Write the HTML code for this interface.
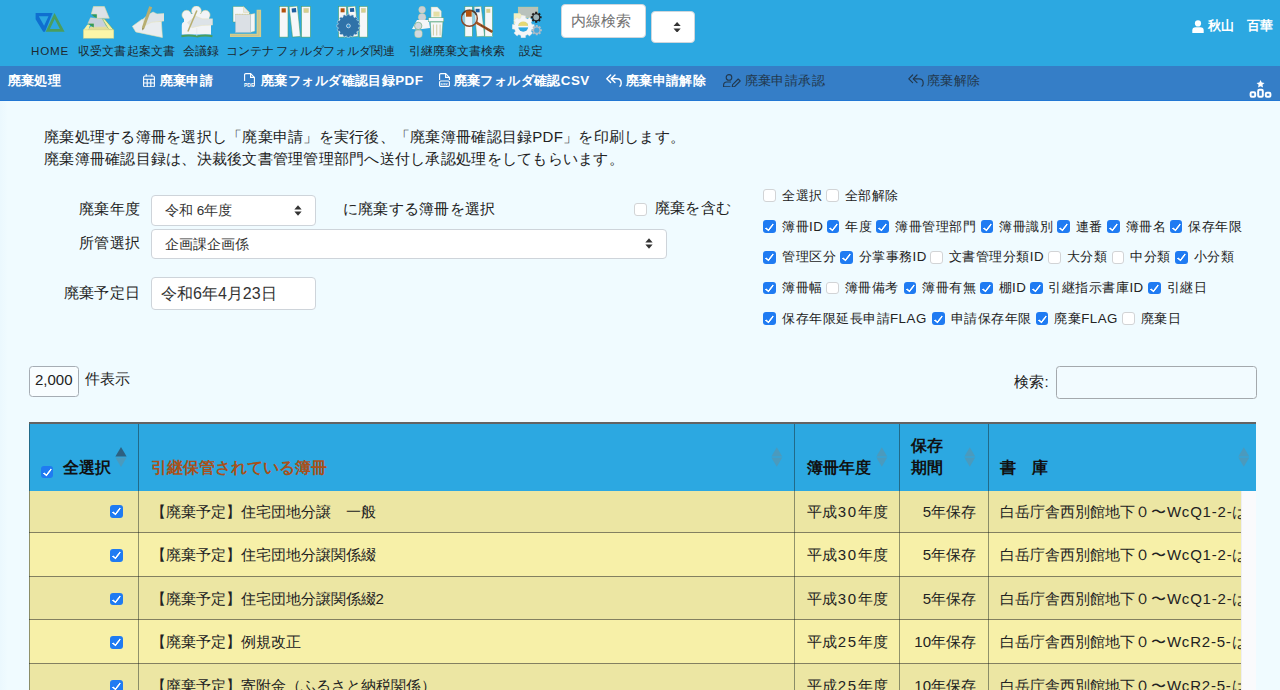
<!DOCTYPE html>
<html lang="ja"><head><meta charset="utf-8">
<style>
*{box-sizing:border-box;margin:0;padding:0}
html,body{width:1280px;height:690px;overflow:hidden}
body{font-family:"Liberation Sans",sans-serif;background:linear-gradient(to right,#ebf8fe 0,#f0fbff 8px) #f0fbff;color:#222;position:relative;font-size:15px}
.abs{position:absolute;white-space:nowrap}
#top{position:absolute;left:0;top:0;width:1280px;height:66px;background:#2ca8e1}
#bar2{position:absolute;left:0;top:66px;width:1280px;height:35px;background:#357ec7;border-bottom:1.5px solid #2277d3}
.nav{position:absolute;top:44px;font-size:11.6px;color:#1c2830;white-space:nowrap;transform:translateX(-50%);line-height:14px}
.ico{position:absolute;top:6px;width:32px;height:32px}
.m{position:absolute;top:72.7px;letter-spacing:.42px;font-size:13.4px;font-weight:bold;color:#fff;white-space:nowrap;line-height:16px}
.m.dis{color:#22384d;font-weight:normal}

.lbl{font-size:15px;line-height:22px;color:#222;letter-spacing:.22px}
.sel{background:#fff;border:1px solid #ced4da;border-radius:4px;color:#333}
.cb{width:12.5px;height:12.5px;border:1px solid #c4c4c4;border-radius:3px;background:#fff}
i.ck{position:absolute;display:block;width:12.8px;height:12.8px;border:1px solid #d2d4d6;border-radius:3px;background:#fff}
i.ck.on{border:none;background:#1f7bf2}
i.ck.on::after{content:"";position:absolute;left:4.1px;top:1.3px;width:2.6px;height:6.9px;border:solid #fff;border-width:0 2.1px 2.1px 0;transform:rotate(38deg);border-radius:.6px}
.ckl{font-size:13.3px;line-height:17px;color:#222;letter-spacing:.5px}
#tbl{position:absolute;left:29px;top:422.4px;width:1227.2px;height:268px;overflow:hidden;border-top:2px solid #636363}
#tbl .hd{position:absolute;left:0;top:0;width:100%;height:67px;background:#2ca8e1}
#tbl .r{position:absolute;left:0;width:100%;border-top:1px solid #838060}
#tbl .r.o{background:#ece6a3}
#tbl .r.e{background:#f7f0a8}
#tbl .vl{position:absolute;top:0;width:1px;height:100%;background:rgba(20,30,30,.45)}
#tbl .sb{position:absolute;left:1212px;top:66.5px;width:16px;height:200px;background:#fafafc;border-left:1px solid #eeeef2}
.th{font-size:16px;font-weight:bold;color:#111;line-height:22px}
.td{font-size:15px;line-height:22px;color:#222}
.so{top:445.9px;width:11.6px;height:22px;fill:#4b9abd}
</style></head><body>
<div id="top"></div>
<div id="bar2"></div>
<!--NAV-->
<svg class="ico" style="left:34px;top:10px;width:32px;height:24px" viewBox="0 0 32 24">
 <path fill-rule="evenodd" fill="#0f6fd0" d="M1.6 3H18.6L11 21.7H9.2L1.6 9.2ZM4.8 6.3H14.5L10.1 15.8Z"/>
 <path fill-rule="evenodd" fill="#4a9d5c" d="M20.5 2.9L30.6 21.7H11.7ZM20.7 8.9L25.9 19H15.9Z"/>
</svg>
<svg class="ico" style="left:82.6px;top:6.4px;height:33px" viewBox="0 0 32 33">
 <polygon points="4.3,18.8 7.2,18.2 5.5,24 .4,24" fill="#f6f1a4"/>
 <polygon points="19.3,13 21.6,13 30.8,24 26,24" fill="#f3eea0" stroke="#4a9d5c" stroke-width=".5"/>
 <polygon points="5,24 7.5,20.5 23.5,20.5 26.5,24" fill="#e3dd98"/>
 <polygon points="7.5,11.8 19.1,13.1 23.3,20.9 10.9,21.2 10.9,17.5 4.9,17.5" fill="#c7d0dc" stroke="#e4dfa0" stroke-width=".5"/>
 <polygon points="4.9,17.7 10.7,17.7 10.7,21.4 7.6,19.6" fill="#3a9a50"/>
 <polygon points="10.4,.6 21.4,.6 26.3,12.2 13.9,12.2 13.9,8.1 8.3,8.1" fill="#dde2e7" stroke="#e4dfa0" stroke-width=".6"/>
 <polygon points="8.3,8.5 13.7,8.5 13.7,12 10.8,10.6" fill="#3a9a50"/>
 <rect x=".4" y="23.9" width="30.4" height="8.3" fill="#fbf6a8" stroke="#cfd08a" stroke-width=".5"/>
</svg>
<svg class="ico" style="left:131.5px;top:6.4px" viewBox="0 0 32 32">
 <polygon points=".4,20.3 9.8,13.4 29.3,15.2 30.4,31.5 3.8,25.9" fill="#e9edf0" stroke="#e8e4b4" stroke-width=".6"/>
 <polygon points="10.5,13.4 16.5,8.6 21,6 25,7.9 32,7.6 32,15 19.5,16.3 13.2,19.4" fill="#dde3e8" stroke="#e8e4b4" stroke-width=".5"/>
 <polygon points="17.2,.2 20.2,1.3 12.4,22.6 9.9,21.6" fill="#b7ae70"/>
 <polygon points="9.9,21.6 12.4,22.6 10.4,24.4" fill="#9a9058"/>
</svg>
<svg class="ico" style="left:181px;top:6px" viewBox="0 0 32 32">
 <g fill="#f2f4f7" stroke="#d8d08c" stroke-width=".5"><circle cx="5.6" cy="9" r="4.7"/><circle cx="24.4" cy="9" r="4.7"/><circle cx="15.4" cy="4.9" r="4.9"/></g>
 <path d="M.8 28.5 V19 Q.8 15.5 5 15.5 H26 Q30 15.5 30 19 V28.5Z" fill="#f2f4f7"/>
 <rect x="3" y="8" width="25" height="9" fill="#f2f4f7"/>
 <polygon points="6.4,16.5 14.6,10.1 21.4,12.8 31.6,12.8 31.6,19.1 20.6,19.5 10.9,21.8" fill="#dde3e8" stroke="#e8e4b4" stroke-width=".4"/>
 <polygon points="15.2,4.2 16.6,4.8 7.6,25.8 6.2,25.2" fill="#b7ae70"/>
 <path d="M.4 30.2 Q8 28.6 15.8 30.4 Q24 28.6 31.4 30.2" fill="none" stroke="#4a9d5c" stroke-width="2"/>
 <path d="M15.8 22V30" stroke="#dfe4e8" stroke-width=".6"/>
</svg>
<svg class="ico" style="left:229.9px;top:6.4px" viewBox="0 0 32 32">
 <polygon points="3,.4 13.5,.4 19.5,6.4 19.5,16 3,16" fill="#f4f6f8" stroke="#4a9d5c" stroke-width=".45"/>
 <polygon points="13.5,.4 13.5,6.4 19.5,6.4" fill="#e3e7ea" stroke="#d8d08c" stroke-width=".4"/>
 <polygon points="20.6,8.3 24.8,7.5 24.8,25.1 20.6,26.3" fill="#f4f6f8" stroke="#d8d08c" stroke-width=".4"/>
 <rect x="5.6" y="8.3" width="15" height="18" fill="#dbe0e5" stroke="#bfc6cc" stroke-width=".5"/>
 <path d="M5.6 8.3H20.6" stroke="#d8d08c" stroke-width=".9" stroke-dasharray="1 .6"/>
 <polygon points="26.6,3.8 31.1,3.8 31.1,31.1 0,31.1 0,27.8 26.6,27.8" fill="#d5cd8a"/>
 <path d="M28.8 5V29.4H1" fill="none" stroke="#b9b9a0" stroke-width=".6"/>
</svg>
<svg class="ico" style="left:279.25px;top:6.4px" viewBox="0 0 32 32">
 <rect x="0.3" y=".4" width="8.7" height="30.7" fill="#f6f7f9" stroke="#4a9d5c" stroke-width=".55"/>
 <rect x="2.6" y="2.3" width="4.2" height="4.2" fill="#b4530f"/>
 <polygon points="10.1,.75 18.4,0 21.4,30.4 13.5,31.1" fill="#f6f7f9" stroke="#4a9d5c" stroke-width=".55"/>
 <rect x="12.6" y="2.5" width="4.4" height="4.1" fill="#1f5f9f" transform="rotate(-5 12.6 2.5)"/>
 <rect x="22.5" y=".4" width="8.899999999999999" height="30.7" fill="#f6f7f9" stroke="#4a9d5c" stroke-width=".55"/>
 <rect x="24.8" y="2.3" width="4.8" height="4.4" fill="#d6cf8e" stroke="#c5c9b0" stroke-width=".4"/>
</svg>
<svg class="ico" style="left:335.5px;top:6.4px" viewBox="0 0 32 32">
 <rect x="2.6" y=".4" width="7.9" height="30.7" fill="#f6f7f9" stroke="#4a9d5c" stroke-width=".55"/>
 <rect x="4.6" y="2.3" width="4" height="4" fill="#b4530f"/>
 <polygon points="11.6,.75 19.5,0 22.2,30.4 14.6,31.1" fill="#f6f7f9" stroke="#4a9d5c" stroke-width=".55"/>
 <rect x="13.8" y="2.3" width="4.2" height="3.8" fill="#1f5f9f" transform="rotate(-5 13.8 2.3)"/>
 <rect x="23.3" y=".4" width="8.2" height="30.7" fill="#f6f7f9" stroke="#4a9d5c" stroke-width=".55"/>
 <rect x="25.2" y="2.3" width="4.4" height="4.2" fill="#d6cf8e" stroke="#c5c9b0" stroke-width=".4"/>
 <polygon points="24.04,18.75 24.04,21.05 22.71,21.27 22.45,22.58 23.60,23.30 22.72,25.42 21.40,25.11 20.66,26.22 21.44,27.32 19.82,28.94 18.72,28.16 17.61,28.90 17.92,30.22 15.80,31.10 15.08,29.95 13.77,30.21 13.55,31.54 11.25,31.54 11.03,30.21 9.72,29.95 9.00,31.10 6.88,30.22 7.19,28.90 6.08,28.16 4.98,28.94 3.36,27.32 4.14,26.22 3.40,25.11 2.08,25.42 1.20,23.30 2.35,22.58 2.09,21.27 0.76,21.05 0.76,18.75 2.09,18.53 2.35,17.22 1.20,16.50 2.08,14.38 3.40,14.69 4.14,13.58 3.36,12.48 4.98,10.86 6.08,11.64 7.19,10.90 6.88,9.58 9.00,8.70 9.72,9.85 11.03,9.59 11.25,8.26 13.55,8.26 13.77,9.59 15.08,9.85 15.80,8.70 17.92,9.58 17.61,10.90 18.72,11.64 19.82,10.86 21.44,12.48 20.66,13.58 21.40,14.69 22.72,14.38 23.60,16.50 22.45,17.22 22.71,18.53" fill="#2f72a8" stroke="#cfe0ee" stroke-width="0.5" stroke-linejoin="round" />
 <circle cx="12.4" cy="19.9" r="1.9" fill="#2c8fd0" stroke="#d6e4f0" stroke-width=".8"/>
</svg>
<svg class="ico" style="left:412.4px;top:6.2px" viewBox="0 0 32 32">
 <circle cx="10.1" cy="3.7" r="3.4" fill="#c9d1d8" stroke="#d8d08c" stroke-width=".4"/>
 <circle cx="10.1" cy="11.3" r="3.8" fill="#c9d1d8" stroke="#d8d08c" stroke-width=".4"/>
 <polygon points="0,23 5,14 16.9,14 18,21.9 6.2,23.6" fill="#f4f6f8"/>
 <circle cx="6.2" cy="19.9" r="3.7" fill="#d3d9df" stroke="#4a9d5c" stroke-width=".5"/>
 <rect x="2.8" y="24.2" width="7.3" height="7.3" rx="2.4" fill="#d3d9df" stroke="#d8d08c" stroke-width=".5"/>
 <polygon points="19.1,1.1 25.3,1.1 29.25,5 29.25,11.8 19.1,11.8" fill="#f4f6f8" stroke="#d8d08c" stroke-width=".4"/>
 <rect x="21.4" y="5.6" width="6.2" height="5" fill="#e4dfa6"/>
 <rect x="16.5" y="11.8" width="15.3" height="4" fill="#f6f7f9" stroke="#4a9d5c" stroke-width=".4"/>
 <polygon points="18.3,16.1 30.9,16.1 29.8,31.5 19.1,31.5" fill="#f6f7f9" stroke="#4a9d5c" stroke-width=".45"/>
 <path d="M21.4 18.5V29.5M24.75 18.5V29.5M28.1 18.5V29.5" stroke="#cfcaa0" stroke-width="1"/>
</svg>
<svg class="ico" style="left:461.4px;top:6.2px" viewBox="0 0 32 32">
 <rect x="3.9" y=".6" width="7.35" height="30.1" fill="#f6f7f9" stroke="#4a9d5c" stroke-width=".5"/>
 <polygon points="13,.8 20.25,.3 23.6,30.2 15.75,30.7" fill="#f6f7f9" stroke="#4a9d5c" stroke-width=".5"/>
 <rect x="14.6" y="2.8" width="4" height="3.5" fill="#1f5f9f"/>
 <rect x="23.85" y=".6" width="7.65" height="30.1" fill="#f6f7f9" stroke="#4a9d5c" stroke-width=".5"/>
 <rect x="25.3" y="2.8" width="4" height="4" fill="#d6cf8e"/>
 <circle cx="8.4" cy="12.4" r="7.9" fill="rgba(235,240,245,.5)" stroke="#8a4a2a" stroke-width="1.5"/>
 <path d="M1.2 9 A7.9 7.9 0 0 1 15.6 9" fill="none" stroke="#4a4038" stroke-width="1.5"/>
 <rect x="5" y="4.5" width="5.7" height="6.2" fill="#b4530f"/>
 <path d="M15.4 16.7 L31.3 25.8" stroke="#a8521c" stroke-width="2.6"/>
 <path d="M20 19.3 L31.3 25.8" stroke="#4a3a30" stroke-width="1.2" stroke-dasharray=".9 .9"/>
</svg>
<svg class="ico" style="left:512px;top:6.2px" viewBox="0 0 32 32">
 <rect x="6.2" y="1.1" width="19.7" height="10.7" fill="#b9c2bc" stroke="#d8d08c" stroke-width=".5"/>
 <polygon points="1.7,7.3 8,7.3 9.5,9 11.6,9 11.6,18 1.7,18" fill="#f1eec0"/>
 <polygon points="22.23,18.61 22.23,22.99 19.94,23.16 19.06,25.27 20.56,27.02 17.47,30.11 15.72,28.61 13.61,29.49 13.44,31.78 9.06,31.78 8.89,29.49 6.78,28.61 5.03,30.11 1.94,27.02 3.44,25.27 2.56,23.16 0.27,22.99 0.27,18.61 2.56,18.44 3.44,16.33 1.94,14.58 5.03,11.49 6.78,12.99 8.89,12.11 9.06,9.82 13.44,9.82 13.61,12.11 15.72,12.99 17.47,11.49 20.56,14.58 19.06,16.33 19.94,18.44" fill="#f5f6f7" stroke="#d9dde0" stroke-width="0.4" stroke-linejoin="round" />
 <circle cx="11.25" cy="20.8" r="4.9" fill="#2ca8e1"/>
 <path d="M6.35 20.3 A4.9 4.9 0 0 1 16.15 20.3Z" fill="#e6d873"/>
 <rect x="6" y="19.9" width="10.5" height="1.5" fill="#f5f6f7"/>
 <polygon points="29.59,10.18 29.59,12.32 28.16,12.32 27.76,13.29 28.77,14.31 27.26,15.82 26.24,14.81 25.27,15.21 25.27,16.64 23.13,16.64 23.13,15.21 22.16,14.81 21.14,15.82 19.63,14.31 20.64,13.29 20.24,12.32 18.81,12.32 18.81,10.18 20.24,10.18 20.64,9.21 19.63,8.19 21.14,6.68 22.16,7.69 23.13,7.29 23.13,5.86 25.27,5.86 25.27,7.29 26.24,7.69 27.26,6.68 28.77,8.19 27.76,9.21 28.16,10.18" fill="#1e1e1e" stroke="none" stroke-width="0" stroke-linejoin="round" />
 <circle cx="24.2" cy="11.25" r="2.9" fill="#9db4b8"/>
 <polygon points="29.85,23.19 29.85,25.21 28.51,25.22 28.13,26.14 29.07,27.09 27.64,28.52 26.69,27.58 25.77,27.96 25.76,29.30 23.74,29.30 23.73,27.96 22.81,27.58 21.86,28.52 20.43,27.09 21.37,26.14 20.99,25.22 19.65,25.21 19.65,23.19 20.99,23.18 21.37,22.26 20.43,21.31 21.86,19.88 22.81,20.82 23.73,20.44 23.74,19.10 25.76,19.10 25.77,20.44 26.69,20.82 27.64,19.88 29.07,21.31 28.13,22.26 28.51,23.18" fill="#b3bdc6" stroke="none" stroke-width="0" stroke-linejoin="round" />
 <circle cx="24.75" cy="24.2" r="2.6" fill="#4aa8dc"/>
</svg>
<div class="nav" style="left:50px;letter-spacing:.8px">HOME</div>
<div class="nav" style="left:101.7px">収受文書</div>
<div class="nav" style="left:150.7px">起案文書</div>
<div class="nav" style="left:200.5px">会議録</div>
<div class="nav" style="left:249.5px">コンテナ</div>
<div class="nav" style="left:299.5px">フォルダ</div>
<div class="nav" style="left:358.7px">フォルダ関連</div>
<div class="nav" style="left:432.5px">引継廃棄</div>
<div class="nav" style="left:480.7px">文書検索</div>
<div class="nav" style="left:531px">設定</div>
<!--/NAV-->
<!--MENU-->
<!-- user -->
<svg class="abs" style="left:1192px;top:20px;width:12px;height:13px" viewBox="0 0 12 13"><circle cx="6" cy="3.4" r="3.1" fill="#fff"/><path d="M0.3 13 V10.6 Q0.3 7.3 3.6 7.3 H8.4 Q11.7 7.3 11.7 10.6 V13Z" fill="#fff"/></svg>
<div class="abs" style="left:1207.5px;top:18px;font-size:12.8px;font-weight:bold;color:#fff;line-height:16px">秋山　百華</div>
<!-- top search -->
<div class="abs" style="left:561px;top:4px;width:84.5px;height:33.8px;background:#fff;border:1px solid #cfd6dc;border-radius:4px;font-size:15px;color:#737373;padding:0 0 0 9px;line-height:31px">内線検索</div>
<div class="abs" style="left:651px;top:11px;width:44px;height:31.5px;background:#fff;border:1px solid #cfd6dc;border-radius:4px"></div>
<svg class="abs" style="left:673px;top:21.7px;width:8.2px;height:10.6px" viewBox="0 0 9 12"><polygon points="4.5,0 8.6,4.6 0.4,4.6" fill="#333"/><polygon points="4.5,12 8.6,7.4 0.4,7.4" fill="#333"/></svg>
<!-- menu bar -->
<div class="m" style="left:7.5px">廃棄処理</div>
<svg class="abs" style="left:143px;top:73.5px;width:12px;height:13.5px" viewBox="0 0 12 13.5" fill="none" stroke="#fff" stroke-width="1.1"><rect x=".6" y="2" width="10.8" height="10.9" rx="1.5"/><path d="M.6 5.2H11.4M.6 9H11.4M4.2 5.2V12.9M7.8 5.2V12.9M3.2 0V2.6M8.8 0V2.6"/></svg>
<div class="m" style="left:159.5px">廃棄申請</div>
<svg class="abs" style="left:244px;top:73px;width:11px;height:14px" viewBox="0 0 11 14" fill="none" stroke="#fff" stroke-width="1.1"><path d="M.6 8V1.8Q.6 .6 1.8 .6H6.6L10.4 4.4V12.2Q10.4 13.4 9.2 13.4H8.5"/><path d="M6.6 .6V4.4H10.4"/><text x="0" y="13.6" font-size="5" font-weight="bold" fill="#fff" stroke="none" font-family="Liberation Sans">PDF</text></svg>
<div class="m" style="left:261px">廃棄フォルダ確認目録PDF</div>
<svg class="abs" style="left:438.5px;top:73px;width:11px;height:14px" viewBox="0 0 11 14" fill="none" stroke="#fff" stroke-width="1.1"><path d="M.6 7V1.8Q.6 .6 1.8 .6H6.6L10.4 4.4V7"/><path d="M6.6 .6V4.4H10.4"/><rect x=".6" y="8" width="9.8" height="5.4" rx="1.2"/><text x="1.6" y="12.3" font-size="4.2" font-weight="bold" fill="#fff" stroke="none" font-family="Liberation Sans">csv</text></svg>
<div class="m" style="left:453.5px">廃棄フォルダ確認CSV</div>
<svg class="abs" style="left:606px;top:74px;width:16px;height:13px" viewBox="0 0 16 13" fill="none" stroke="#fff" stroke-width="1.4" stroke-linecap="round" stroke-linejoin="round"><path d="M4.6 1 L.8 4.8 L4.6 8.6"/><path d="M9 1 L5.2 4.8 L9 8.6"/><path d="M5.6 4.8H11Q15.2 4.8 15.2 9.2Q15.2 11 14 12.2"/></svg>
<div class="m" style="left:625.7px">廃棄申請解除</div>
<svg class="abs" style="left:723px;top:73.5px;width:18px;height:13.5px" viewBox="0 0 18 13.5" fill="none" stroke="#22384d" stroke-width="1.1" stroke-linecap="round" stroke-linejoin="round"><circle cx="6" cy="3.4" r="2.8"/><path d="M.6 12.9V11.2Q.6 8 3.8 8H7.6"/><path d="M.6 12.9H7"/><path d="M9.6 10.6 L15.2 5 L17.2 7 L11.6 12.6 L9.2 13Z"/></svg>
<div class="m dis" style="left:744.5px">廃棄申請承認</div>
<svg class="abs" style="left:907.5px;top:74px;width:16px;height:13px" viewBox="0 0 16 13" fill="none" stroke="#22384d" stroke-width="1.2" stroke-linecap="round" stroke-linejoin="round"><path d="M4.6 1 L.8 4.8 L4.6 8.6"/><path d="M9 1 L5.2 4.8 L9 8.6"/><path d="M5.6 4.8H11Q15.2 4.8 15.2 9.2Q15.2 11 14 12.2"/></svg>
<div class="m dis" style="left:927px">廃棄解除</div>
<svg class="abs" style="left:1249px;top:80px;width:23px;height:18px" viewBox="0 0 23 18"><polygon points="11.5,0 13.1,3.4 16.8,3.8 14,6.3 14.8,10 11.5,8.1 8.2,10 9,6.3 6.2,3.8 9.9,3.4" fill="#fff" transform="translate(2.8,0) scale(.76)"/><g fill="none" stroke="#fff" stroke-width="2"><rect x="1.6" y="12.2" width="4.6" height="4.6" rx="1.2"/><rect x="9.2" y="9.8" width="4.6" height="7" rx="1.2"/><rect x="16.8" y="12.8" width="4.6" height="4" rx="1.2"/></g></svg>
<!--/MENU-->
<!--FORM-->
<div class="abs" style="left:44px;top:126px;font-size:15px;letter-spacing:.26px;line-height:22px;color:#222">廃棄処理する簿冊を選択し「廃棄申請」を実行後、「廃棄簿冊確認目録PDF」を印刷します。<br>廃棄簿冊確認目録は、決裁後文書管理管理部門へ送付し承認処理をしてもらいます。</div>
<div class="abs lbl" style="right:1140px;top:198px">廃棄年度</div>
<div class="abs sel" style="left:151px;top:194.5px;width:165px;height:31px;font-size:13.5px;line-height:29px;padding-left:13px">令和 6年度</div>
<svg class="abs" style="left:293.5px;top:204.5px;width:8px;height:11px" viewBox="0 0 9 12"><polygon points="4.5,0 8.6,4.8 0.4,4.8" fill="#333"/><polygon points="4.5,12 8.6,7.2 0.4,7.2" fill="#333"/></svg>
<div class="abs lbl" style="left:343px;top:198px">に廃棄する簿冊を選択</div>
<i class="ck" style="left:634.4px;top:203px"></i>
<div class="abs lbl" style="left:655px;top:196.5px">廃棄を含む</div>
<div class="abs lbl" style="right:1140px;top:232px">所管選択</div>
<div class="abs sel" style="left:151px;top:228.5px;width:516px;height:30px;font-size:13.5px;line-height:29px;padding-left:13px">企画課企画係</div>
<svg class="abs" style="left:644.5px;top:238px;width:8px;height:11px" viewBox="0 0 9 12"><polygon points="4.5,0 8.6,4.8 0.4,4.8" fill="#333"/><polygon points="4.5,12 8.6,7.2 0.4,7.2" fill="#333"/></svg>
<div class="abs lbl" style="right:1140px;top:282px">廃棄予定日</div>
<div class="abs sel" style="left:151px;top:277.3px;width:165px;height:33.2px;font-size:16px;line-height:31px;padding-left:9px">令和6年4月23日</div>
<!--/FORM-->
<!--CHECKS-->
<i class="ck" style="left:763.4px;top:189.3px"></i><div class="abs ckl" style="left:782.0px;top:186.8px">全選択</div>
<i class="ck" style="left:826.0px;top:189.3px"></i><div class="abs ckl" style="left:844.6px;top:186.8px">全部解除</div>
<i class="ck on" style="left:763.4px;top:220.4px"></i><div class="abs ckl" style="left:782.0px;top:217.9px">簿冊ID</div>
<i class="ck on" style="left:826.5px;top:220.4px"></i><div class="abs ckl" style="left:845.1px;top:217.9px">年度</div>
<i class="ck on" style="left:876.4px;top:220.4px"></i><div class="abs ckl" style="left:895.0px;top:217.9px">簿冊管理部門</div>
<i class="ck on" style="left:980.7px;top:220.4px"></i><div class="abs ckl" style="left:999.3px;top:217.9px">簿冊識別</div>
<i class="ck on" style="left:1057.1px;top:220.4px"></i><div class="abs ckl" style="left:1075.7px;top:217.9px">連番</div>
<i class="ck on" style="left:1107.0px;top:220.4px"></i><div class="abs ckl" style="left:1125.6px;top:217.9px">簿冊名</div>
<i class="ck on" style="left:1169.6px;top:220.4px"></i><div class="abs ckl" style="left:1188.2px;top:217.9px">保存年限</div>
<i class="ck on" style="left:763.4px;top:250.9px"></i><div class="abs ckl" style="left:782.0px;top:248.4px">管理区分</div>
<i class="ck on" style="left:840.0px;top:250.9px"></i><div class="abs ckl" style="left:858.6px;top:248.4px">分掌事務ID</div>
<i class="ck" style="left:930.2px;top:250.9px"></i><div class="abs ckl" style="left:948.8px;top:248.4px">文書管理分類ID</div>
<i class="ck" style="left:1048.3px;top:250.9px"></i><div class="abs ckl" style="left:1066.9px;top:248.4px">大分類</div>
<i class="ck" style="left:1111.6px;top:250.9px"></i><div class="abs ckl" style="left:1130.2px;top:248.4px">中分類</div>
<i class="ck on" style="left:1175.2px;top:250.9px"></i><div class="abs ckl" style="left:1193.8px;top:248.4px">小分類</div>
<i class="ck on" style="left:763.4px;top:281.7px"></i><div class="abs ckl" style="left:782.0px;top:279.2px">簿冊幅</div>
<i class="ck" style="left:826.0px;top:281.7px"></i><div class="abs ckl" style="left:844.6px;top:279.2px">簿冊備考</div>
<i class="ck on" style="left:903.5px;top:281.7px"></i><div class="abs ckl" style="left:922.1px;top:279.2px">簿冊有無</div>
<i class="ck on" style="left:980.0px;top:281.7px"></i><div class="abs ckl" style="left:998.6px;top:279.2px">棚ID</div>
<i class="ck on" style="left:1029.8px;top:281.7px"></i><div class="abs ckl" style="left:1048.4px;top:279.2px">引継指示書庫ID</div>
<i class="ck on" style="left:1148.0px;top:281.7px"></i><div class="abs ckl" style="left:1166.6px;top:279.2px">引継日</div>
<i class="ck on" style="left:763.4px;top:312.4px"></i><div class="abs ckl" style="left:782.0px;top:309.9px">保存年限延長申請FLAG</div>
<i class="ck on" style="left:932.0px;top:312.4px"></i><div class="abs ckl" style="left:950.6px;top:309.9px">申請保存年限</div>
<i class="ck on" style="left:1035.6px;top:312.4px"></i><div class="abs ckl" style="left:1054.2px;top:309.9px">廃棄FLAG</div>
<i class="ck" style="left:1122.1px;top:312.4px"></i><div class="abs ckl" style="left:1140.7px;top:309.9px">廃棄日</div>
<!--/CHECKS-->
<!--TABLE-->
<div class="abs" style="left:29px;top:366px;width:49.5px;height:30.5px;border:1px solid #a6adb4;border-radius:3.5px;background:#f8fdff;font-size:15px;line-height:26.5px;text-align:center;color:#222">2,000</div>
<div class="abs lbl" style="left:84.5px;top:368px">件表示</div>
<div class="abs lbl" style="left:1014px;top:371px">検索:</div>
<div class="abs" style="left:1056px;top:366px;width:200.5px;height:33px;border:1px solid #a4a9ad;border-radius:3.5px;background:#f2fbff"></div>
<div id="tbl">
 <div class="hd"></div>
 <div class="r o" style="top:66.6px;height:41.3px;border-top:none"></div>
 <div class="r e" style="top:107.9px;height:43.6px"></div>
 <div class="r o" style="top:151.5px;height:43.6px"></div>
 <div class="r e" style="top:195.1px;height:43.6px"></div>
 <div class="r o" style="top:238.7px;height:43.6px"></div>
 <div class="vl" style="left:0"></div><div class="vl" style="left:109px"></div><div class="vl" style="left:765.3px"></div><div class="vl" style="left:870px"></div><div class="vl" style="left:959px"></div>
 <div class="sb"></div>
</div>
<i class="ck on" style="left:40.5px;top:465.5px;width:12px;height:12px"></i>
<div class="abs th" style="left:62.5px;top:457px">全選択</div>
<div class="abs th" style="left:150.5px;top:457px;color:#a8511a">引継保管されている簿冊</div>
<div class="abs th" style="left:806.7px;top:457px">簿冊年度</div>
<div class="abs th" style="left:911.3px;top:434.6px;line-height:22.4px">保存<br>期間</div>
<div class="abs th" style="left:999.7px;top:457px">書　庫</div>
<svg class="abs" style="left:115px;top:445.6px;width:12px;height:22px" viewBox="0 0 12 20"><polygon points="6,0 11.6,9.4 .4,9.4" fill="#2d6080"/><polygon points="6,20 11.6,10.6 .4,10.6" fill="#4b9abd"/></svg>
<svg class="abs so" style="left:771px" viewBox="0 0 12 20"><polygon points="6,0 11.6,9.4 .4,9.4"/><polygon points="6,20 11.6,10.6 .4,10.6"/></svg>
<svg class="abs so" style="left:876.2px" viewBox="0 0 12 20"><polygon points="6,0 11.6,9.4 .4,9.4"/><polygon points="6,20 11.6,10.6 .4,10.6"/></svg>
<svg class="abs so" style="left:964.2px" viewBox="0 0 12 20"><polygon points="6,0 11.6,9.4 .4,9.4"/><polygon points="6,20 11.6,10.6 .4,10.6"/></svg>
<svg class="abs so" style="left:1237.6px" viewBox="0 0 12 20"><polygon points="6,0 11.6,9.4 .4,9.4"/><polygon points="6,20 11.6,10.6 .4,10.6"/></svg>
<i class="ck on" style="left:109.8px;top:505.2px"></i>
<div class="abs td" style="left:150.5px;top:500.5px">【廃棄予定】住宅団地分譲　一般</div>
<div class="abs td" style="left:807px;top:500.5px">平成<span style="letter-spacing:1.6px;margin-left:.8px">30</span>年度</div>
<div class="abs td" style="right:304.0px;top:500.5px">5年保存</div>
<div class="abs td" style="left:1000.3px;top:500.5px;width:240.5px;overflow:hidden">白岳庁舎西別館地下<span style="letter-spacing:.8px">０〜WcQ1-2-は</span></div>
<i class="ck on" style="left:109.8px;top:549.0px"></i>
<div class="abs td" style="left:150.5px;top:544.3px">【廃棄予定】住宅団地分譲関係綴</div>
<div class="abs td" style="left:807px;top:544.3px">平成<span style="letter-spacing:1.6px;margin-left:.8px">30</span>年度</div>
<div class="abs td" style="right:304.0px;top:544.3px">5年保存</div>
<div class="abs td" style="left:1000.3px;top:544.3px;width:240.5px;overflow:hidden">白岳庁舎西別館地下<span style="letter-spacing:.8px">０〜WcQ1-2-は</span></div>
<i class="ck on" style="left:109.8px;top:592.6px"></i>
<div class="abs td" style="left:150.5px;top:587.9px">【廃棄予定】住宅団地分譲関係綴2</div>
<div class="abs td" style="left:807px;top:587.9px">平成<span style="letter-spacing:1.6px;margin-left:.8px">30</span>年度</div>
<div class="abs td" style="right:304.0px;top:587.9px">5年保存</div>
<div class="abs td" style="left:1000.3px;top:587.9px;width:240.5px;overflow:hidden">白岳庁舎西別館地下<span style="letter-spacing:.8px">０〜WcQ1-2-は</span></div>
<i class="ck on" style="left:109.8px;top:636.1px"></i>
<div class="abs td" style="left:150.5px;top:631.4px">【廃棄予定】例規改正</div>
<div class="abs td" style="left:807px;top:631.4px">平成<span style="letter-spacing:1.6px;margin-left:.8px">25</span>年度</div>
<div class="abs td" style="right:304.0px;top:631.4px">10年保存</div>
<div class="abs td" style="left:1000.3px;top:631.4px;width:240.5px;overflow:hidden">白岳庁舎西別館地下<span style="letter-spacing:.8px">０〜WcR2-5-は</span></div>
<i class="ck on" style="left:109.8px;top:679.7px"></i>
<div class="abs td" style="left:150.5px;top:675.0px">【廃棄予定】寄附金（ふるさと納税関係）</div>
<div class="abs td" style="left:807px;top:675.0px">平成<span style="letter-spacing:1.6px;margin-left:.8px">25</span>年度</div>
<div class="abs td" style="right:304.0px;top:675.0px">10年保存</div>
<div class="abs td" style="left:1000.3px;top:675.0px;width:240.5px;overflow:hidden">白岳庁舎西別館地下<span style="letter-spacing:.8px">０〜WcR2-5-は</span></div>
<!--/TABLE-->
</body></html>
